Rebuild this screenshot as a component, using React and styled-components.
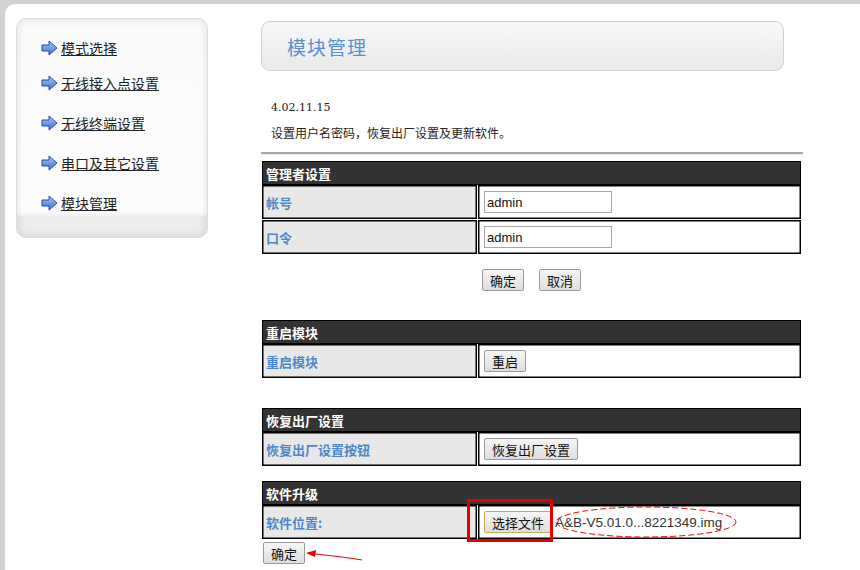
import styled, { createGlobalStyle } from 'styled-components';

const GlobalStyle = createGlobalStyle`
  html, body {
    margin: 0;
    padding: 0;
    height: 100%;
  }
  body {
    background: #d2d2d2;
    font-family: "Liberation Sans", "Noto Sans CJK SC", sans-serif;
  }
`;

const Page = styled.div`
  padding: 4px 0 0 5px;
  height: 570px;
  box-sizing: border-box;
  overflow: hidden;
`;

const Card = styled.div`
  background: #fff;
  border-top-left-radius: 10px;
  height: 100%;
  display: flex;
  align-items: flex-start;
`;

const Sidebar = styled.nav`
  margin: 14px 0 0 11px;
  width: 192px;
  height: 220px;
  box-sizing: border-box;
  border: 1px solid #dcdcdc;
  border-radius: 10px;
  background: linear-gradient(to bottom, #fafafa 0%, #fdfdfd 88%, #ececec 91%, #ececec 100%);
  box-shadow: inset 0 0 8px rgba(0, 0, 0, 0.12);
  padding: 19px 0 0 24px;
`;

const MenuList = styled.ul`
  list-style: none;
  margin: 0;
  padding: 0;
  display: flex;
  flex-direction: column;
  gap: 20px;
`;

const MenuItem = styled.li`
  display: flex;
  align-items: center;
  gap: 3px;
  height: 20px;
  &:first-child {
    margin-bottom: -5px;
  }
`;

const MenuLink = styled.a`
  font-family: "Noto Sans CJK SC", sans-serif;
  font-size: 14px;
  color: #222;
  text-decoration: underline;
`;

const ArrowIcon = () => (
  <svg width="17" height="16" viewBox="0 0 17 16">
    <defs>
      <linearGradient id="arr" x1="0" y1="0" x2="0" y2="1">
        <stop offset="0" stopColor="#a9c6f2" />
        <stop offset="1" stopColor="#3f72cf" />
      </linearGradient>
    </defs>
    <path
      d="M1 5 H8 V1 L16 8 L8 15 V11 H1 Z"
      fill="url(#arr)"
      stroke="#1f4fa8"
      strokeWidth="1"
      strokeLinejoin="round"
    />
  </svg>
);

const Main = styled.main`
  margin: 17px 0 0 53px;
  width: 542px;
  display: flex;
  flex-direction: column;
`;

const TitleBox = styled.div`
  width: 523px;
  height: 50px;
  box-sizing: border-box;
  border: 1px solid #d0d0d0;
  border-radius: 9px;
  background: linear-gradient(to bottom, #f8f8f8, #e9e9e9);
  display: flex;
  align-items: center;
  padding-left: 25px;
`;

const Title = styled.h1`
  margin: 0;
  font-family: "Noto Sans CJK SC", sans-serif;
  font-size: 19px;
  font-weight: normal;
  color: #5a8fd0;
  letter-spacing: 1px;
`;

const Version = styled.div`
  margin: 29px 0 0 10px;
  font-family: "DejaVu Serif", serif;
  font-size: 11px;
  line-height: 16px;
  color: #222;
`;

const Desc = styled.div`
  margin: 9px 0 0 10px;
  font-family: "Noto Sans CJK SC", sans-serif;
  font-size: 12px;
  line-height: 16px;
  color: #222;
`;

const Rule = styled.hr`
  margin: 11px 0 0 0;
  border: 0;
  border-top: 2px solid #a6a6a6;
  border-bottom: 1px solid #efefef;
  width: 542px;
`;

const Section = styled.section`
  margin: ${p => p.$top}px 0 0 1px;
  width: 539px;
  display: grid;
  grid-template-columns: 215px 1fr;
  row-gap: 1px;
  column-gap: 1px;
`;

const SectionHead = styled.div`
  grid-column: 1 / -1;
  height: 24px;
  box-sizing: border-box;
  background: #333;
  border: 1px solid #000;
  color: #fff;
  font-family: "Noto Sans CJK SC", sans-serif;
  font-weight: bold;
  font-size: 13px;
  display: flex;
  align-items: center;
  padding-left: 3px;
  margin-bottom: -1px;
`;

const LabelCell = styled.div`
  height: 34px;
  box-sizing: border-box;
  border: 1px solid #000;
  box-shadow: inset 0 0 0 0.5px #000;
  background: #e8e8e8;
  color: #4d88c9;
  font-family: "Noto Sans CJK SC", sans-serif;
  font-weight: bold;
  font-size: 13px;
  display: flex;
  align-items: center;
  padding-left: 3px;
`;

const ValueCell = styled.div`
  position: relative;
  height: 34px;
  box-sizing: border-box;
  border: 1px solid #000;
  box-shadow: inset 0 0 0 0.5px #000;
  background: #fff;
  display: flex;
  align-items: center;
  gap: 3px;
  padding-left: 5px;
`;

const TextInput = styled.input`
  width: 128px;
  height: 22px;
  box-sizing: border-box;
  border: 1px solid #a8a8a8;
  padding: 0 2px;
  font-family: "Liberation Sans", sans-serif;
  font-size: 13px;
  color: #111;
  outline: none;
`;

const Button = styled.button`
  height: 22px;
  padding: 0 7px;
  box-sizing: border-box;
  border: 1px solid ${p => (p.$focus ? '#d5a55a' : '#9a9a9a')};
  border-radius: 2px;
  background: linear-gradient(to bottom, #f6f6f6, #dedede);
  font-family: "Noto Sans CJK SC", sans-serif;
  font-size: 13px;
  color: #111;
  cursor: pointer;
  white-space: nowrap;
`;

const ButtonRow = styled.div`
  width: 539px;
  margin: 15px 0 0 1px;
  display: flex;
  justify-content: center;
  gap: 15px;
`;

const FileName = styled.span`
  font-family: "Liberation Sans", sans-serif;
  font-size: 13.5px;
  color: #333;
`;

const RedBox = styled.div`
  position: absolute;
  left: -12px;
  top: -7px;
  width: 86px;
  height: 43px;
  box-sizing: border-box;
  border: 3px solid #e60000;
  pointer-events: none;
`;

const Ellipse = styled.svg`
  position: absolute;
  left: 75px;
  top: -1px;
  pointer-events: none;
`;

const SubmitWrap = styled.div`
  position: relative;
  margin: 3px 0 0 2px;
  align-self: flex-start;
`;

const Arrow = styled.svg`
  position: absolute;
  left: 42px;
  top: 6px;
  pointer-events: none;
`;

const menu = ['模式选择', '无线接入点设置', '无线终端设置', '串口及其它设置', '模块管理'];

export default function App() {
  return (
    <>
      <GlobalStyle />
      <Page>
        <Card>
          <Sidebar>
            <MenuList>
              {menu.map(m => (
                <MenuItem key={m}>
                  <ArrowIcon />
                  <MenuLink>{m}</MenuLink>
                </MenuItem>
              ))}
            </MenuList>
          </Sidebar>
          <Main>
            <TitleBox>
              <Title>模块管理</Title>
            </TitleBox>
            <Version>4.02.11.15</Version>
            <Desc>设置用户名密码，恢复出厂设置及更新软件。</Desc>
            <Rule />

            <Section $top={6}>
              <SectionHead>管理者设置</SectionHead>
              <LabelCell>帐号</LabelCell>
              <ValueCell>
                <TextInput defaultValue="admin" />
              </ValueCell>
              <LabelCell>口令</LabelCell>
              <ValueCell>
                <TextInput defaultValue="admin" />
              </ValueCell>
            </Section>
            <ButtonRow>
              <Button>确定</Button>
              <Button>取消</Button>
            </ButtonRow>

            <Section $top={29}>
              <SectionHead>重启模块</SectionHead>
              <LabelCell>重启模块</LabelCell>
              <ValueCell>
                <Button>重启</Button>
              </ValueCell>
            </Section>

            <Section $top={30}>
              <SectionHead>恢复出厂设置</SectionHead>
              <LabelCell>恢复出厂设置按钮</LabelCell>
              <ValueCell>
                <Button>恢复出厂设置</Button>
              </ValueCell>
            </Section>

            <Section $top={15}>
              <SectionHead>软件升级</SectionHead>
              <LabelCell>软件位置:</LabelCell>
              <ValueCell>
                <Button $focus>选择文件</Button>
                <FileName>A&amp;B-V5.01.0...8221349.img</FileName>
                <RedBox />
                <Ellipse width="184" height="34" viewBox="0 0 184 34">
                  <ellipse cx="92" cy="17" rx="90" ry="15" fill="none" stroke="#e00" strokeWidth="1" strokeDasharray="6 3" />
                </Ellipse>
              </ValueCell>
            </Section>

            <SubmitWrap>
              <Button>确定</Button>
              <Arrow width="60" height="14" viewBox="0 0 60 14">
                <path d="M57 12 Q40 9 10 6" fill="none" stroke="#e00" strokeWidth="1" />
                <path d="M1 5 L11 2 L10 9 Z" fill="#e00" />
              </Arrow>
            </SubmitWrap>
          </Main>
        </Card>
      </Page>
    </>
  );
}
